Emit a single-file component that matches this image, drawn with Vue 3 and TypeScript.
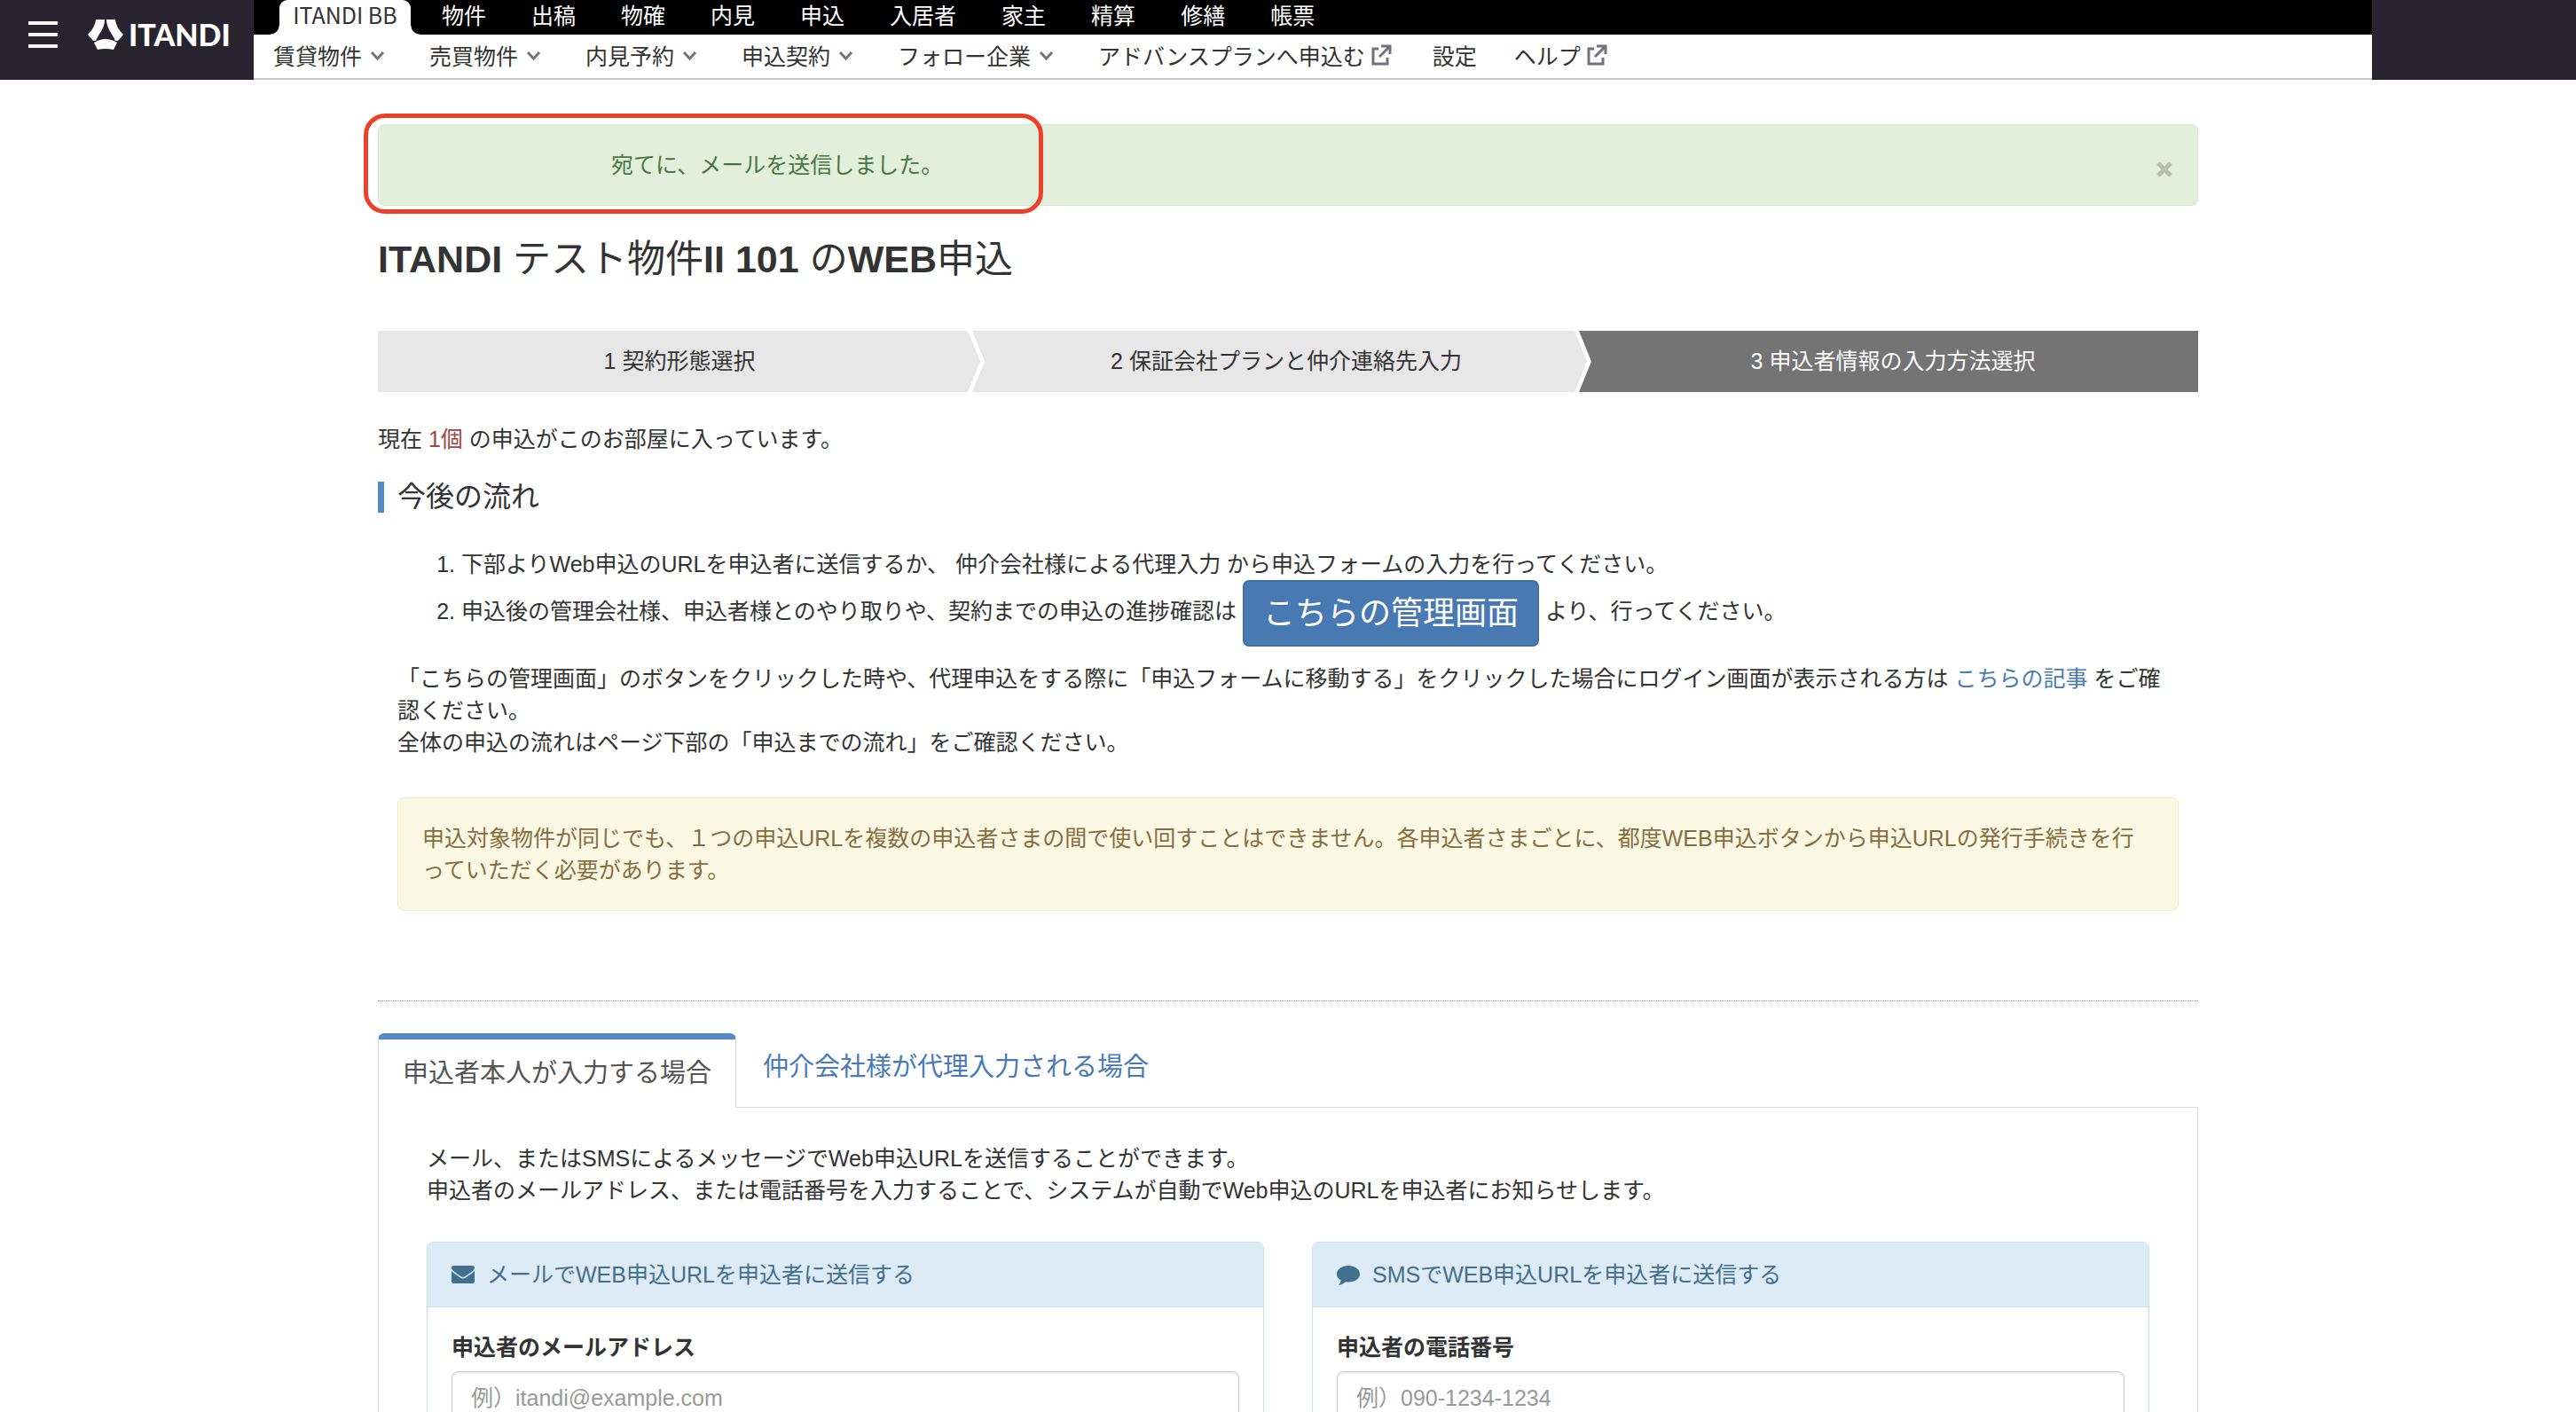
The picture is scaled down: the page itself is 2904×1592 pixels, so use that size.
<script setup lang="ts">
import { ref } from 'vue'

interface MenuItem {
  label: string
  icon?: 'chevron' | 'external'
}

interface SendPanel {
  id: string
  icon: 'mail' | 'comment'
  title: string
  label: string
  type: string
  placeholder: string
}

const products: string[] = ['物件', '出稿', '物確', '内見', '申込', '入居者', '家主', '精算', '修繕', '帳票']

const menu: MenuItem[] = [
  { label: '賃貸物件', icon: 'chevron' },
  { label: '売買物件', icon: 'chevron' },
  { label: '内見予約', icon: 'chevron' },
  { label: '申込契約', icon: 'chevron' },
  { label: 'フォロー企業', icon: 'chevron' },
  { label: 'アドバンスプランへ申込む', icon: 'external' },
  { label: '設定' },
  { label: 'ヘルプ', icon: 'external' },
]

const steps: string[] = ['1 契約形態選択', '2 保証会社プランと仲介連絡先入力', '3 申込者情報の入力方法選択']
const currentStep = 2

const panels: SendPanel[] = [
  {
    id: 'applicant-mail',
    icon: 'mail',
    title: 'メールでWEB申込URLを申込者に送信する',
    label: '申込者のメールアドレス',
    type: 'email',
    placeholder: '例）itandi@example.com',
  },
  {
    id: 'applicant-tel',
    icon: 'comment',
    title: 'SMSでWEB申込URLを申込者に送信する',
    label: '申込者の電話番号',
    type: 'tel',
    placeholder: '例）090-1234-1234',
  },
]

const values = ref<Record<string, string>>({})
const alertOpen = ref(true)
</script>

<template>
  <div class="page">
    <header class="header">
      <div class="brand">
        <button type="button" class="hamburger" aria-label="メニュー">
          <span></span><span></span><span></span>
        </button>
        <a href="#" class="logo">
          <svg class="logo-mark" viewBox="0 0 40 34" aria-hidden="true">
            <path d="M9 0H19C19 10 13 15 9 24H6L0 17C5 12 8.500 6 9 0Z" />
            <path d="M31 0H21C21 10 27 15 31 24H34L40 17C35 12 31.500 6 31 0Z" />
            <path d="M7 26Q20 18 33 26L29 34Q20 32 11 34Z" />
          </svg>
          <span>ITANDI</span>
        </a>
      </div>
      <div class="navs">
        <nav class="products">
          <a href="#" class="product-current">ITANDI BB</a>
          <a v-for="p in products" :key="p" href="#">{{ p }}</a>
        </nav>
        <nav class="menu">
          <a v-for="m in menu" :key="m.label" href="#">
            {{ m.label }}
            <svg v-if="m.icon === 'chevron'" class="menu-icon" viewBox="0 0 34 24" aria-hidden="true">
              <path d="M11 9L17.500 16L24 9" />
            </svg>
            <svg v-else-if="m.icon === 'external'" class="menu-icon" viewBox="0 0 34 24" aria-hidden="true">
              <path d="M15 5H9V22H25V15M18 2H28V11M27 3L16 14" />
            </svg>
          </a>
        </nav>
      </div>
    </header>

    <main class="container">
      <div v-if="alertOpen" class="alert" role="status">
        <span>宛てに、メールを送信しました。</span>
        <button type="button" class="close" aria-label="閉じる" @click="alertOpen = false">
          <svg viewBox="0 0 20 20" aria-hidden="true"><path d="M3 3L17 17M17 3L3 17" /></svg>
        </button>
        <div class="highlight"></div>
      </div>

      <h1><b>ITANDI</b> テスト物件<b>II 101</b> の<b>WEB</b>申込</h1>

      <ol class="steps">
        <li v-for="(s, i) in steps" :key="s" :class="{ current: i === currentStep }">
          {{ s }}
          <svg v-if="i < steps.length - 1" class="step-arrow" viewBox="0 0 19 69" preserveAspectRatio="none" aria-hidden="true">
            <rect width="19" height="69" :class="i + 1 === currentStep ? 'fill-dark' : 'fill-light'" />
            <path class="fill-white" d="M0 0H5L19 34.500L5 69H0Z" />
            <path class="fill-light" d="M0 0L14 34.500L0 69Z" />
          </svg>
        </li>
      </ol>

      <p class="count">現在 <span class="danger">1個</span> の申込がこのお部屋に入っています。</p>

      <h2>今後の流れ</h2>
      <section class="flow">
        <ol class="flow-list">
          <li>下部よりWeb申込のURLを申込者に送信するか、 仲介会社様による代理入力 から申込フォームの入力を行ってください。</li>
          <li>申込後の管理会社様、申込者様とのやり取りや、契約までの申込の進捗確認は <a href="#" class="btn">こちらの管理画面</a> より、行ってください。</li>
        </ol>
        <p>
          「こちらの管理画面」のボタンをクリックした時や、代理申込をする際に「申込フォームに移動する」をクリックした場合にログイン画面が表示される方は <a href="#" class="link">こちらの記事</a> をご確認ください。<br />
          全体の申込の流れはページ下部の「申込までの流れ」をご確認ください。
        </p>
        <div class="warning">申込対象物件が同じでも、１つの申込URLを複数の申込者さまの間で使い回すことはできません。各申込者さまごとに、都度WEB申込ボタンから申込URLの発行手続きを行っていただく必要があります。</div>
      </section>

      <hr />

      <nav class="tabs">
        <a href="#self" class="tab active" aria-current="true">申込者本人が入力する場合</a>
        <a href="#agent" class="tab">仲介会社様が代理入力される場合</a>
      </nav>
      <section id="self" class="tab-body">
        <p>
          メール、またはSMSによるメッセージでWeb申込URLを送信することができます。<br />
          申込者のメールアドレス、または電話番号を入力することで、システムが自動でWeb申込のURLを申込者にお知らせします。
        </p>
        <div class="panels">
          <form v-for="p in panels" :key="p.id" class="panel" @submit.prevent>
            <h3>
              <svg v-if="p.icon === 'mail'" class="panel-icon" viewBox="0 0 26 24" aria-hidden="true">
                <path d="M2.500 2H23.500Q26 2 26 4.500C26 7 22 9.500 15.500 14Q13 16 10.500 14C4 9.500 0 7 0 4.500Q0 2 2.500 2Z" />
                <path d="M0 8C3 11 6 12.500 9.500 15.200Q13 18 16.500 15.200C20 12.500 23 11 26 8V19.500Q26 22 23.500 22H2.500Q0 22 0 19.500Z" />
              </svg>
              <svg v-else class="panel-icon" viewBox="0 0 26 24" aria-hidden="true">
                <path d="M13 2C20 2 26 6 26 11.500S20 20.500 13 20.500Q11.500 20.500 10 20.300Q6.500 23.500 2 24Q4.500 21.500 4.800 18.600Q0 16 0 11.500C0 6 6 2 13 2Z" />
              </svg>
              {{ p.title }}
            </h3>
            <div class="panel-body">
              <label :for="p.id">{{ p.label }}</label>
              <input :id="p.id" v-model="values[p.id]" :type="p.type" :placeholder="p.placeholder" />
            </div>
          </form>
        </div>
      </section>
    </main>
  </div>
</template>

<style>
body {
  margin: 0;
  background: #fff;
}
</style>

<style scoped>
.page {
  font-family: 'Liberation Sans', 'Noto Sans CJK JP', sans-serif;
  font-size: 25px;
  line-height: 36px;
  color: #333;
}

.page * {
  box-sizing: border-box;
}

a {
  color: inherit;
  text-decoration: none;
}

p,
h1,
h2,
h3,
ol {
  margin: 0;
  padding: 0;
  font-weight: 400;
}

button {
  padding: 0;
  border: 0;
  background: none;
  cursor: pointer;
}

/* Header */
.header {
  display: grid;
  grid-template-columns: 286px 1fr 230px;
  height: 90px;
  background: #27242f;
  font-family: 'Noto Sans CJK JP', sans-serif;
}

.brand {
  display: flex;
  align-items: center;
  gap: 34px;
  padding: 0 0 12px 32px;
}

.hamburger {
  display: flex;
  flex-direction: column;
  gap: 9px;
  width: 33px;
}

.hamburger span {
  height: 4px;
  background: #f4f4f5;
}

.logo {
  display: flex;
  align-items: center;
  gap: 6px;
  color: #fff;
  font-family: Lato, sans-serif;
  font-size: 34px;
  font-weight: 900;
}

.logo-mark {
  width: 40px;
  height: 34px;
  fill: #fff;
}

.navs {
  display: flex;
  flex-direction: column;
  min-width: 0;
  background: #fff;
  border-bottom: 2px solid #c7c5cb;
  white-space: nowrap;
}

.products {
  display: flex;
  gap: 51px;
  height: 39px;
  padding-left: 29px;
  background: #000;
  color: #fff;
  line-height: 32px;
}

.product-current {
  position: relative;
  width: 148px;
  margin-right: -16px;
  border-radius: 9px 9px 0 0;
  background: #fff;
  color: #333;
  text-align: center;
}

.product-current::before,
.product-current::after {
  content: '';
  position: absolute;
  bottom: 0;
  width: 10px;
  height: 10px;
}

.product-current::before {
  right: 100%;
  background: radial-gradient(circle at 0 0, #000 9px, #fff 10px);
}

.product-current::after {
  left: 100%;
  background: radial-gradient(circle at 100% 0, #000 9px, #fff 10px);
}

.menu {
  display: flex;
  flex: 1;
  align-items: center;
  gap: 42px;
  padding: 0 0 3px 22px;
}

.menu a {
  display: flex;
  align-items: center;
}

.menu-icon {
  width: 34px;
  height: 24px;
  fill: none;
  stroke: #74717d;
  stroke-width: 3;
}

/* Page column */
.container {
  max-width: 2052px;
  margin: 0 auto;
  padding-top: 50px;
}

.alert {
  position: relative;
  display: flex;
  align-items: center;
  justify-content: space-between;
  height: 92px;
  padding: 0 27px 0 262px;
  border: 1px solid #d8e8c8;
  border-radius: 7px;
  background: #e2efda;
  color: #4a7744;
}

.close {
  display: flex;
  padding-top: 10px;
}

.close svg {
  width: 20px;
  height: 20px;
  stroke: #b5c0ae;
  stroke-width: 5;
}

.highlight {
  position: absolute;
  top: -13px;
  left: -17px;
  width: 766px;
  height: 113px;
  border: 5px solid #ec4127;
  border-radius: 24px;
  pointer-events: none;
}

h1 {
  margin-top: 36px;
  font-size: 43px;
  line-height: 48px;
}

.steps {
  display: flex;
  margin-top: 57px;
  list-style: none;
}

.steps li {
  position: relative;
  flex: 1;
  padding-right: 4px;
  background: #e7e7e7;
  line-height: 69px;
  text-align: center;
}

.steps .current {
  background: #747474;
  color: #fff;
}

.step-arrow {
  position: absolute;
  top: 0;
  right: 0;
  width: 19px;
  height: 100%;
}

.fill-light {
  fill: #e7e7e7;
}

.fill-dark {
  fill: #747474;
}

.fill-white {
  fill: #fff;
}

.count {
  margin-top: 35px;
}

.danger {
  color: #a24643;
}

h2 {
  margin-top: 30px;
  padding-left: 15px;
  border-left: 7px solid #5588c7;
  font-size: 32px;
  line-height: 35px;
}

.flow {
  padding: 0 22px;
}

.flow-list {
  margin: 40px 0 18px;
  padding-left: 72px;
}

.btn {
  display: inline-block;
  padding: 0 21px;
  border: 2px solid #4170a8;
  border-radius: 7px;
  background: #4879b3;
  color: #fff;
  font-size: 36px;
  line-height: 71px;
  vertical-align: middle;
}

.link {
  color: #4a7ab5;
}

.warning {
  margin-top: 44px;
  padding: 27px;
  border: 1px solid #f6e9cb;
  border-radius: 7px;
  background: #fbf8e4;
  color: #876d40;
}

hr {
  margin: 101px 0 36px;
  border: 0;
  border-top: 1px dotted #888;
}

/* Tabs */
.tabs {
  display: flex;
  align-items: stretch;
  font-size: 29px;
  line-height: 41px;
}

.tab {
  padding: 18px 30px;
  color: #4a7ab5;
}

.tab.active {
  margin-bottom: -1px;
  padding: 18px 27px;
  border: 1px solid #ddd;
  border-top: 7px solid #5588c7;
  border-bottom: 0;
  border-radius: 7px 7px 0 0;
  background: #fff;
  color: #555;
}

.tab-body {
  padding: 39px 54px;
  border: 1px solid #ddd;
}

.panels {
  display: grid;
  grid-template-columns: 1fr 1fr;
  gap: 54px;
  margin-top: 40px;
}

.panel {
  border: 1px solid #c2e6ee;
  border-radius: 7px;
  overflow: hidden;
}

h3 {
  display: flex;
  align-items: center;
  gap: 14px;
  padding: 18px 27px;
  border-bottom: 1px solid #c2e6ee;
  background: #ddebf6;
  color: #436f8e;
  font-size: 25px;
}

.panel-icon {
  width: 26px;
  height: 24px;
  fill: currentColor;
}

.panel-body {
  padding: 27px;
}

label {
  display: block;
  margin-bottom: 9px;
  font-weight: 700;
}

input {
  display: block;
  width: 100%;
  height: 61px;
  padding: 0 21px;
  border: 1px solid #ccc;
  border-radius: 7px;
  box-shadow: inset 0 2px 2px rgba(0, 0, 0, 0.08);
  color: #555;
  font: inherit;
}

input::placeholder {
  color: #999;
  opacity: 1;
}
</style>
